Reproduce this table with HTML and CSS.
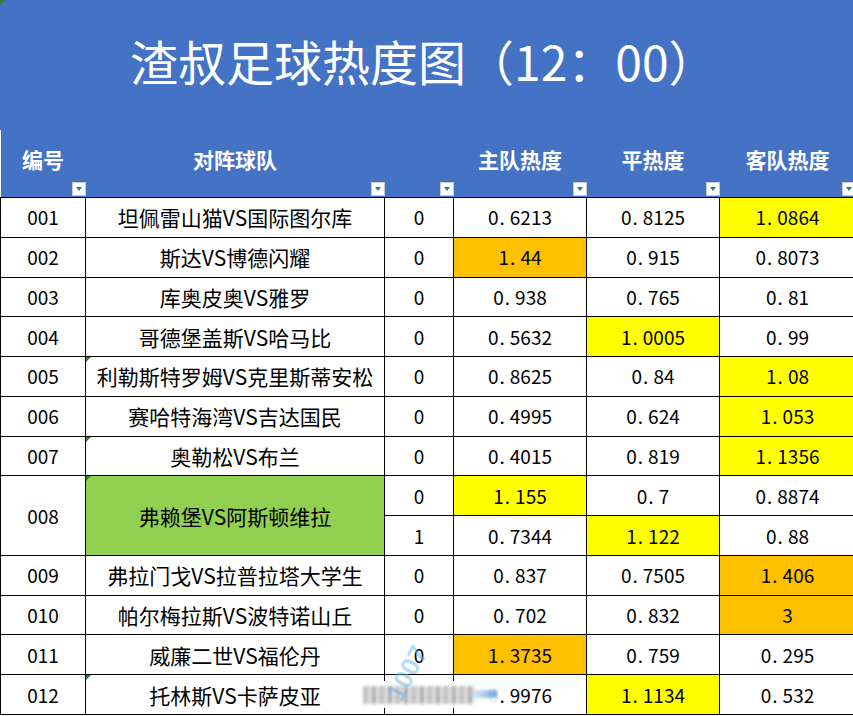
FILE: index.html
```html
<!DOCTYPE html>
<html lang="zh-CN">
<head>
<meta charset="utf-8">
<title>渣叔足球热度图</title>
<link rel="stylesheet" href="styles.css">
</head>
<body>
<div class="sheet">
  <span class="corner"></span>
  <div class="title">渣叔足球热度图（12：00）</div>
  <table class="grid">
    <colgroup>
      <col class="c-id"><col class="c-team"><col class="c-flag"><col class="c-num"><col class="c-num"><col class="c-last">
    </colgroup>
    <thead>
      <tr>
        <th><div class="hd"><span class="lbl">编号</span><span class="filter"></span></div></th>
        <th><div class="hd"><span class="lbl">对阵球队</span><span class="filter"></span></div></th>
        <th><div class="hd"><span class="lbl"></span><span class="filter"></span></div></th>
        <th><div class="hd"><span class="lbl">主队热度</span><span class="filter"></span></div></th>
        <th><div class="hd"><span class="lbl">平热度</span><span class="filter"></span></div></th>
        <th><div class="hd"><span class="lbl">客队热度</span><span class="filter"></span></div></th>
      </tr>
    </thead>
    <tbody>
      <tr><td>001</td><td class="team">坦佩雷山猫VS国际图尔库</td><td>0</td><td>0<span class="dp">.</span>6213</td><td>0<span class="dp">.</span>8125</td><td class="y">1<span class="dp">.</span>0864</td></tr>
      <tr><td>002</td><td class="team">斯达VS博德闪耀</td><td>0</td><td class="o">1<span class="dp">.</span>44</td><td>0<span class="dp">.</span>915</td><td>0<span class="dp">.</span>8073</td></tr>
      <tr><td>003</td><td class="team">库奥皮奥VS雅罗</td><td>0</td><td>0<span class="dp">.</span>938</td><td>0<span class="dp">.</span>765</td><td>0<span class="dp">.</span>81</td></tr>
      <tr><td>004</td><td class="team">哥德堡盖斯VS哈马比</td><td>0</td><td>0<span class="dp">.</span>5632</td><td class="y">1<span class="dp">.</span>0005</td><td>0<span class="dp">.</span>99</td></tr>
      <tr><td>005</td><td class="team mark">利勒斯特罗姆VS克里斯蒂安松</td><td>0</td><td>0<span class="dp">.</span>8625</td><td>0<span class="dp">.</span>84</td><td class="y">1<span class="dp">.</span>08</td></tr>
      <tr><td>006</td><td class="team">赛哈特海湾VS吉达国民</td><td>0</td><td>0<span class="dp">.</span>4995</td><td>0<span class="dp">.</span>624</td><td class="y">1<span class="dp">.</span>053</td></tr>
      <tr><td>007</td><td class="team mark">奥勒松VS布兰</td><td>0</td><td>0<span class="dp">.</span>4015</td><td>0<span class="dp">.</span>819</td><td class="y">1<span class="dp">.</span>1356</td></tr>
      <tr><td rowspan="2">008</td><td rowspan="2" class="team g mark">弗赖堡VS阿斯顿维拉</td><td>0</td><td class="y">1<span class="dp">.</span>155</td><td>0<span class="dp">.</span>7</td><td>0<span class="dp">.</span>8874</td></tr>
      <tr><td>1</td><td>0<span class="dp">.</span>7344</td><td class="y">1<span class="dp">.</span>122</td><td>0<span class="dp">.</span>88</td></tr>
      <tr><td>009</td><td class="team">弗拉门戈VS拉普拉塔大学生</td><td>0</td><td>0<span class="dp">.</span>837</td><td>0<span class="dp">.</span>7505</td><td class="o">1<span class="dp">.</span>406</td></tr>
      <tr><td>010</td><td class="team">帕尔梅拉斯VS波特诺山丘</td><td>0</td><td>0<span class="dp">.</span>702</td><td>0<span class="dp">.</span>832</td><td class="o">3</td></tr>
      <tr><td>011</td><td class="team">威廉二世VS福伦丹</td><td>0</td><td class="o">1<span class="dp">.</span>3735</td><td>0<span class="dp">.</span>759</td><td>0<span class="dp">.</span>295</td></tr>
      <tr><td>012</td><td class="team mark">托林斯VS卡萨皮亚</td><td>0</td><td>0<span class="dp">.</span>9976</td><td class="y">1<span class="dp">.</span>1134</td><td>0<span class="dp">.</span>532</td></tr>
    </tbody>
  </table>
  <div class="wm"><span class="wm-smudge"></span><span class="wm-tail"></span></div>
  <span class="wm-id">1007</span>
</div>
</body>
</html>
```

FILE: styles.css
```css
html, body {
  margin: 0;
  padding: 0;
  background: #ffffff;
  overflow: hidden;
}

body {
  font-family: "Noto Sans CJK SC", "Noto Sans", sans-serif;
  color: #000000;
}

.sheet {
  position: relative;
  width: 853px;
  height: 716px;
  overflow: hidden;
}

.corner {
  position: absolute;
  left: 0;
  top: 0;
  width: 0;
  height: 0;
  border-top: 5px solid #2e7d32;
  border-right: 5px solid transparent;
  z-index: 2;
}

.title {
  height: 130px;
  box-sizing: border-box;
  background: #4472c4;
  color: #ffffff;
  font-size: 48px;
  line-height: 56px;
  display: flex;
  align-items: center;
  justify-content: flex-start;
  padding-left: 130px;
  padding-bottom: 10px;
  white-space: nowrap;
}

.grid {
  border-collapse: collapse;
  table-layout: fixed;
  width: 855px;
}

.c-id { width: 85px; }
.c-team { width: 299px; }
.c-flag { width: 69px; }
.c-num { width: 133px; }
.c-last { width: 136px; }

.grid th {
  background: #4472c4;
  color: #ffffff;
  padding: 0;
  height: 67px;
  vertical-align: top;
  font-weight: 700;
  font-size: 21px;
}

.hd {
  display: flex;
  flex-direction: column;
  height: 67px;
}

.lbl {
  height: 24px;
  line-height: 24px;
  margin-top: 17px;
  text-align: center;
  white-space: nowrap;
}

.filter {
  align-self: flex-end;
  margin-top: auto;
  margin-bottom: 1px;
  width: 14px;
  height: 14px;
  box-sizing: border-box;
  background: #ffffff;
  border: 1px solid #c8c8c8;
  display: flex;
  align-items: center;
  justify-content: center;
}

.filter::after {
  content: "";
  width: 0;
  height: 0;
  border-left: 3px solid transparent;
  border-right: 3px solid transparent;
  border-top: 4px solid #1e8a52;
}

.grid tbody tr {
  height: 39.77px;
}

.grid td {
  border: 1px solid #000000;
  padding: 0;
  text-align: center;
  vertical-align: middle;
  font-size: 19px;
  line-height: 24px;
  white-space: nowrap;
}

.grid td.team {
  font-size: 21px;
}

.dp {
  padding-left: 1px;
  padding-right: 5px;
}

.y { background: #ffff00; }
.o { background: #ffc000; }
.g { background: #92d050; }

.mark {
  position: relative;
}

.mark::before {
  content: "";
  position: absolute;
  left: 0;
  top: 0;
  width: 0;
  height: 0;
  border-top: 5px solid #2e7d32;
  border-right: 5px solid transparent;
}

.wm {
  position: absolute;
  left: 355px;
  top: 681px;
  width: 144px;
  height: 27px;
  background: rgba(255, 255, 255, 0.94);
}

.wm-smudge {
  position: absolute;
  left: 8px;
  top: 5px;
  width: 112px;
  height: 18px;
  background: repeating-linear-gradient(90deg, #b4b4b4 0 5px, #d6d6d6 5px 9px, #9c9c9c 9px 13px, #e2e2e2 13px 16px);
  filter: blur(1.8px);
  opacity: 0.8;
}

.wm-tail {
  position: absolute;
  left: 118px;
  top: 9px;
  width: 24px;
  height: 8px;
  background: linear-gradient(90deg, rgba(150, 190, 230, 0.3), rgba(90, 150, 215, 0.85));
  filter: blur(1.5px);
}

.wm-id {
  position: absolute;
  left: 378px;
  top: 660px;
  font-family: "Liberation Sans", sans-serif;
  font-weight: 700;
  font-size: 26px;
  line-height: 26px;
  color: rgba(110, 185, 230, 0.5);
  transform: rotate(-62deg);
  white-space: nowrap;
}
```
